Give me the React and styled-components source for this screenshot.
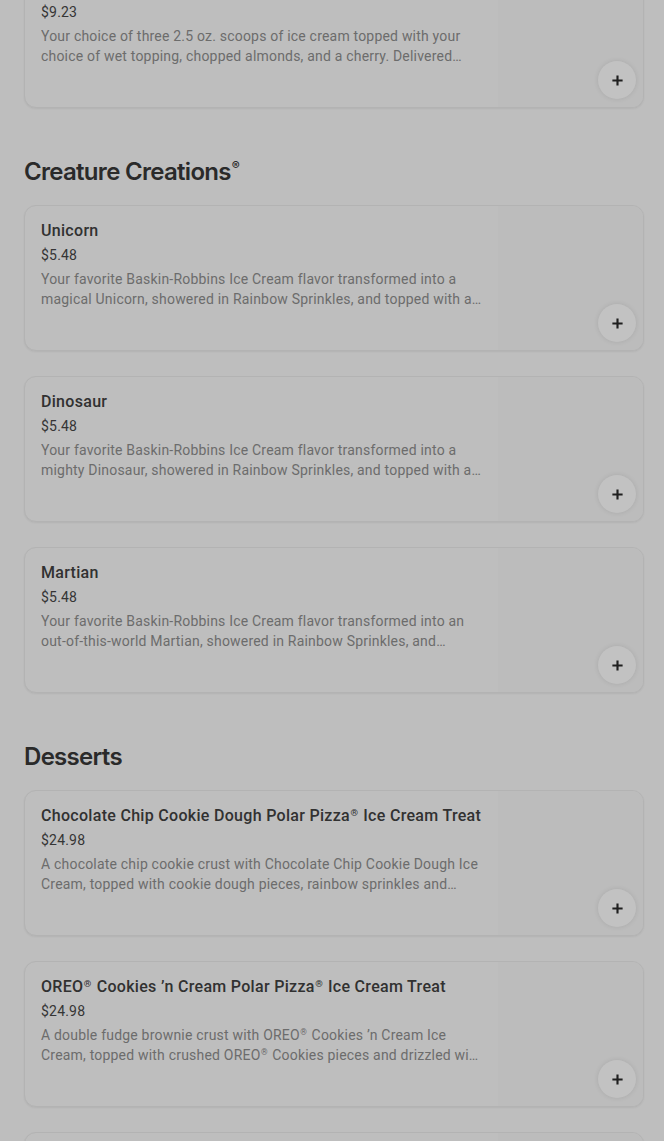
import styled, { createGlobalStyle } from 'styled-components';

const GlobalStyle = createGlobalStyle`
  html, body {
    margin: 0;
    padding: 0;
    background: #bebebe;
    overflow: hidden;
  }
  body {
    font-family: Roboto, "Liberation Sans", sans-serif;
    -webkit-font-smoothing: antialiased;
  }
`;

const sections = [
  {
    title: null,
    items: [
      {
        name: 'Sundae',
        price: '$9.23',
        desc: 'Your choice of three 2.5 oz. scoops of ice cream topped with your choice of wet topping, chopped almonds, and a cherry. Delivered in\u00a0a\u00a0container.',
      },
    ],
  },
  {
    title: 'Creature Creations',
    reg: true,
    items: [
      {
        name: 'Unicorn',
        price: '$5.48',
        desc: 'Your favorite Baskin-Robbins Ice Cream flavor transformed into a magical Unicorn, showered in Rainbow Sprinkles, and topped with a waffle cone horn.',
      },
      {
        name: 'Dinosaur',
        price: '$5.48',
        desc: 'Your favorite Baskin-Robbins Ice Cream flavor transformed into a mighty Dinosaur, showered in Rainbow Sprinkles, and topped with a candy spikes.',
      },
      {
        name: 'Martian',
        price: '$5.48',
        desc: 'Your favorite Baskin-Robbins Ice Cream flavor transformed into an out-of-this-world Martian, showered in Rainbow Sprinkles, and topped with antennae.',
      },
    ],
  },
  {
    title: 'Desserts',
    items: [
      {
        name: 'Chocolate Chip Cookie Dough Polar Pizza® Ice Cream Treat',
        price: '$24.98',
        desc: 'A chocolate chip cookie crust with Chocolate Chip Cookie Dough Ice Cream, topped with cookie dough pieces, rainbow sprinkles and chocolate drizzle.',
      },
      {
        name: 'OREO® Cookies ’n Cream Polar Pizza® Ice Cream Treat',
        price: '$24.98',
        desc: 'A double fudge brownie crust with OREO® Cookies ’n Cream Ice Cream, topped with crushed OREO® Cookies pieces and drizzled with fudge.',
      },
      {
        name: 'Brownie Polar Pizza® Ice Cream Treat',
        price: '$24.98',
        desc: 'A double fudge brownie crust with ice cream.',
      },
    ],
  },
];

// render ® as a small raised mark, as the menu does
function withReg(text) {
  return text.split('®').flatMap((part, i) => (i === 0 ? [part] : [<Reg key={i}>®</Reg>, part]));
}

function PlusIcon() {
  return (
    <svg width="13" height="13" viewBox="0 0 14 14" aria-hidden="true">
      <path d="M7 1.5v11M1.5 7h11" stroke="#1f1f1f" strokeWidth="2.3" fill="none" />
    </svg>
  );
}

function MenuItem({ item }) {
  return (
    <Card>
      <Info>
        <ItemName>{withReg(item.name)}</ItemName>
        <Price>{item.price}</Price>
        <Desc>{withReg(item.desc)}</Desc>
      </Info>
      <Thumb>
        <AddButton aria-label="Add">
          <PlusIcon />
        </AddButton>
      </Thumb>
    </Card>
  );
}

export default function App() {
  return (
    <>
      <GlobalStyle />
      <Page>
        {sections.map((section, i) => (
          <Section key={i}>
            {section.title && (
              <Heading>
                {section.title}
                {section.reg && <sup>®</sup>}
              </Heading>
            )}
            <List>
              {section.items.map((item) => (
                <MenuItem key={item.name} item={item} />
              ))}
            </List>
          </Section>
        ))}
      </Page>
    </>
  );
}

const Page = styled.div`
  display: flex;
  flex-direction: column;
  gap: 50px;
  padding: 0 20px 0 24px;
  margin-top: -38px;
`;

const Section = styled.section`
  display: flex;
  flex-direction: column;
`;

const Heading = styled.h2`
  margin: 0 0 19px 0;
  height: 28px;
  font-family: Inter, "Liberation Sans", sans-serif;
  font-size: 24px;
  line-height: 28px;
  font-weight: 600;
  letter-spacing: -0.7px;
  color: #2a2a2a;

  sup {
    font-size: 12px;
    line-height: 0;
    vertical-align: 0;
    position: relative;
    top: -10px;
    margin-left: 1px;
    letter-spacing: 0;
  }
`;

const Reg = styled.span`
  font-size: 0.6em;
  line-height: 0;
  position: relative;
  top: -0.55em;
  letter-spacing: 0;
  margin: 0 1px 0 0.5px;
`;

const List = styled.div`
  display: flex;
  flex-direction: column;
  gap: 25px;
`;

const Card = styled.div`
  display: flex;
  height: 146px;
  box-sizing: border-box;
  border: 1px solid #b3b3b3;
  border-radius: 12px;
  background: #bebebe;
  box-shadow: 0 1px 2px rgba(0, 0, 0, 0.06);
  overflow: hidden;
`;

const Info = styled.div`
  flex: 1;
  min-width: 0;
  padding: 15px 14px 0 16px;
  display: flex;
  flex-direction: column;
`;

const ItemName = styled.div`
  font-size: 16px;
  line-height: 20px;
  font-weight: 500;
  letter-spacing: 0.3px;
  color: #313131;
  white-space: nowrap;
  overflow: hidden;
  text-overflow: ellipsis;
`;

const Price = styled.div`
  margin-top: 4px;
  font-size: 14px;
  line-height: 20px;
  letter-spacing: 0.2px;
  color: #353535;
`;

const Desc = styled.div`
  margin-top: 4px;
  margin-right: 2px;
  font-size: 14px;
  line-height: 20px;
  letter-spacing: 0.2px;
  color: #6c6c6c;
  display: -webkit-box;
  -webkit-line-clamp: 2;
  -webkit-box-orient: vertical;
  overflow: hidden;
`;

const Thumb = styled.div`
  position: relative;
  width: 145px;
  flex-shrink: 0;
  background: #bcbcbc;
`;

const AddButton = styled.button`
  position: absolute;
  right: 7px;
  bottom: 8px;
  width: 38px;
  height: 38px;
  border-radius: 50%;
  border: none;
  padding: 0;
  background: #c2c2c2;
  box-shadow: 0 0 5px rgba(0, 0, 0, 0.1);
  display: flex;
  align-items: center;
  justify-content: center;
  cursor: pointer;
`;
